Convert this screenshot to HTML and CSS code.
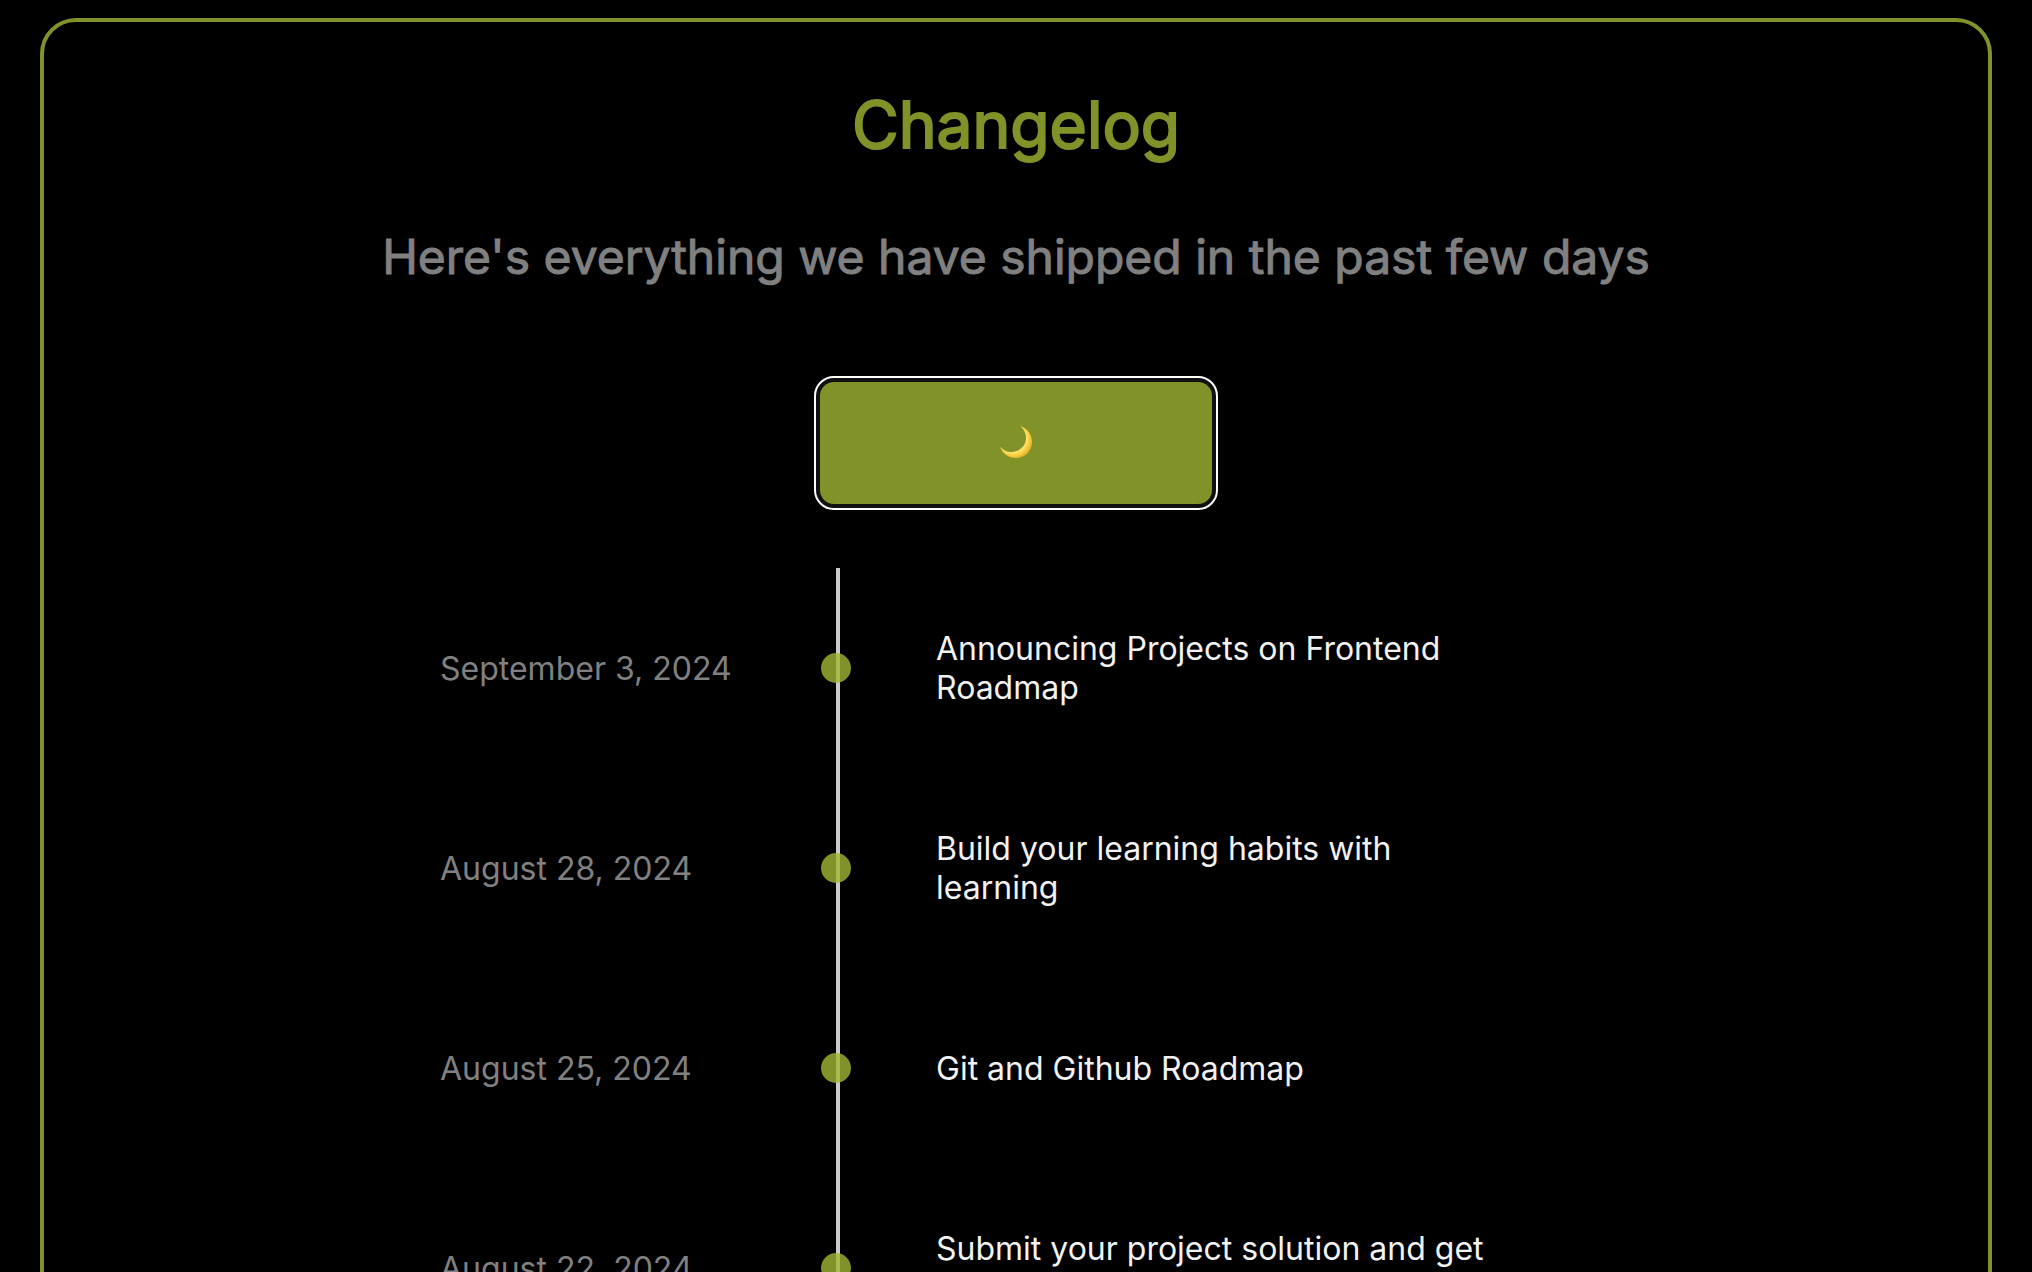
FILE: index.html
```html
<!DOCTYPE html>
<html lang="en">
<head>
<meta charset="utf-8">
<meta name="viewport" content="width=device-width, initial-scale=1">
<title>Changelog</title>
<link rel="stylesheet" href="styles.css">
</head>
<body>
<main class="frame">
  <h1 class="title">Changelog</h1>
  <h2 class="subtitle">Here's everything we have shipped in the past few days</h2>
  <button class="theme-toggle" type="button" aria-label="Toggle theme">
    <svg class="moon" viewBox="0 0 32 32" aria-hidden="true">
      <defs>
        <radialGradient id="glow" gradientUnits="userSpaceOnUse" cx="13" cy="13" r="20">
          <stop offset="0.6" stop-color="#ffec80"/>
          <stop offset="0.78" stop-color="#fbd548"/>
          <stop offset="1" stop-color="#e9ae28"/>
        </radialGradient>
      </defs>
      <path fill="url(#glow)" d="M20.5 0C28 3 32 9 32 16C32 25 25 32 16 32C8.500 32 2.500 27.500 0 20.500C4 25 8 26.500 12 26C20 25.500 26 19.500 26 12C26 7 24 3.500 20.500 0Z"/>
    </svg>
  </button>
  <ul class="timeline">
    <li class="entry"><time class="date" datetime="2024-09-03">September 3, 2024</time><span class="marker"></span><p class="text">Announcing Projects on Frontend Roadmap</p></li>
    <li class="entry"><time class="date" datetime="2024-08-28">August 28, 2024</time><span class="marker"></span><p class="text">Build your learning habits with learning</p></li>
    <li class="entry"><time class="date" datetime="2024-08-25">August 25, 2024</time><span class="marker"></span><p class="text">Git and Github Roadmap</p></li>
    <li class="entry"><time class="date" datetime="2024-08-22">August 22, 2024</time><span class="marker"></span><p class="text">Submit your project solution and get feedback</p></li>
  </ul>
</main>
</body>
</html>
```
FILE: styles.css
```css
* {
  box-sizing: border-box;
}

html {
  background: #000;
  scrollbar-width: none;
}

body {
  margin: 0;
  padding: 18px 40px;
  font-family: Inter, "Liberation Sans", sans-serif;
  font-size: 32px;
  line-height: 39px;
  color: #f2f2f2;
}

.frame {
  display: flex;
  flex-direction: column;
  align-items: center;
  padding: 64px 32px;
  border: 4px solid #809228;
  border-radius: 36px;
}

.title {
  margin: 0;
  font-size: 64px;
  line-height: 78px;
  font-weight: 400;
  -webkit-text-stroke: 2px currentColor;
  color: #809228;
}

.subtitle {
  margin: 64px 0 0;
  font-size: 48px;
  line-height: 58px;
  font-weight: 400;
  -webkit-text-stroke: 1px currentColor;
  text-align: center;
  color: #808080;
}

.theme-toggle {
  display: flex;
  align-items: center;
  justify-content: center;
  width: 392px;
  height: 122px;
  margin: 96px 0 64px;
  padding: 0 0 2px;
  border: 0;
  border-radius: 14px;
  background: #809228;
  box-shadow: 0 0 0 4px #101010;
  outline: 2px solid #fff;
  outline-offset: 4px;
}

.moon {
  width: 32px;
  height: 32px;
}

.timeline {
  width: 100%;
  max-width: 1152px;
  margin: 0;
  padding: 0 96px 0 0;
  list-style: none;
}

.entry {
  display: grid;
  grid-template-columns: 1fr 30px 560px;
  column-gap: 85px;
  align-items: center;
  min-height: 200px;
}

.date {
  color: #808080;
  white-space: nowrap;
}

.marker {
  position: relative;
  display: flex;
  align-items: center;
  align-self: stretch;
}

.marker::before {
  content: "";
  position: absolute;
  top: 0;
  bottom: 0;
  left: 15px;
  width: 4px;
  background: #ccc;
}

.marker::after {
  content: "";
  position: relative;
  width: 30px;
  height: 30px;
  border-radius: 50%;
  background: #a0b732;
  opacity: 0.8;
}

.text {
  margin: 0;
}
```
